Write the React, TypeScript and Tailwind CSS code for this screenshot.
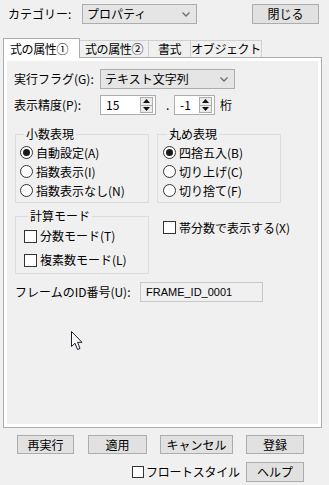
import React from 'react';

const Chevron = () => (
  <svg width="8" height="5" viewBox="0 0 8 5" className="shrink-0">
    <path d="M0.5 0.5 L4 4 L7.5 0.5" fill="none" stroke="#6d6d6d" strokeWidth="1.3" />
  </svg>
);

const Radio = ({ label, checked }: { label: string; checked?: boolean }) => (
  <div className="flex items-center h-[19px]">
    <span className="w-[13px] h-[13px] rounded-full border border-[#333] bg-white flex items-center justify-center shrink-0">
      {checked && <span className="w-[7px] h-[7px] rounded-full bg-[#1a1a1a]" />}
    </span>
    <span className="ml-[3px]">{label}</span>
  </div>
);

const Check = ({ label }: { label: string }) => (
  <div className="flex items-center">
    <span className="w-[13px] h-[13px] border border-[#333] bg-white shrink-0" />
    <span className="ml-[3px]">{label}</span>
  </div>
);

const Spin = ({ value, className }: { value: string; className: string }) => (
  <div className={`h-[20px] border border-[#adadad] bg-white flex items-center ${className}`}>
    <span className="pl-[5px] flex-1">{value}</span>
    <div className="mr-[2px] w-[13px] h-[16px] border border-[#adadad] bg-[#ececec] flex flex-col">
      <div className="flex-1 flex items-center justify-center border-b border-[#adadad]">
        <svg width="7" height="4" viewBox="0 0 7 4"><path d="M0 4 L3.5 0 L7 4 Z" fill="#111" /></svg>
      </div>
      <div className="flex-1 flex items-center justify-center">
        <svg width="7" height="4" viewBox="0 0 7 4"><path d="M0 0 L3.5 4 L7 0 Z" fill="#111" /></svg>
      </div>
    </div>
  </div>
);

const Btn = ({ label, className }: { label: string; className: string }) => (
  <button className={`border border-[#adadad] bg-[#e1e1e1] flex items-center justify-center leading-none ${className}`}>
    {label}
  </button>
);

export default function App() {
  return (
    <div className="relative w-[329px] h-[485px] bg-[#f0f0f0] text-[12px] leading-none text-black whitespace-nowrap font-['Noto_Sans_CJK_JP','Liberation_Sans',sans-serif] pt-[4px] overflow-hidden">
      {/* top row */}
      <div className="flex items-center h-[20px]">
        <span className="ml-[8px] w-[74px]">カテゴリー:</span>
        <div className="w-[115px] h-[20px] border border-[#adadad] bg-[#e5e5e5] flex items-center justify-between pl-[4px] pr-[6px]">
          <span>プロパティ</span>
          <Chevron />
        </div>
        <Btn label="閉じる" className="ml-[55px] w-[67px] h-[20px]" />
      </div>

      {/* tabs */}
      <div className="relative z-10 mt-[14px] ml-[3px] flex items-start h-[19px] tracking-[-0.4px]">
        <div className="w-[77px] h-[20px] border border-b-0 border-[#acacac] bg-white flex items-center pl-[6px]">式の属性①</div>
        <div className="mt-[2px] w-[69px] h-[17px] border border-l-0 border-b-0 border-[#d0d0d0] flex items-center justify-center">式の属性②</div>
        <div className="mt-[2px] w-[42px] h-[17px] border border-l-0 border-b-0 border-[#d0d0d0] flex items-center justify-center">書式</div>
        <div className="mt-[2px] w-[71px] h-[17px] border border-l-0 border-b-0 border-[#d0d0d0] flex items-center justify-center">オブジェクト</div>
      </div>

      {/* panel */}
      <div className="ml-[3px] w-[319px] h-[371px] border border-[#acacac] bg-white p-[3px]">
        <div className="h-full bg-[#f0f0f0] pt-[8px]">
          <div className="flex items-center h-[20px] pl-[7px]">
            <span className="w-[86px]">実行フラグ(G):</span>
            <div className="w-[135px] h-[20px] border border-[#adadad] bg-[#e5e5e5] flex items-center justify-between pl-[4px] pr-[6px]">
              <span>テキスト文字列</span>
              <Chevron />
            </div>
          </div>
          <div className="mt-[6px] flex items-center h-[20px] pl-[7px]">
            <span className="w-[86px]">表示精度(P):</span>
            <Spin value="15" className="w-[56px]" />
            <span className="ml-[10px] w-[8px]">.</span>
            <Spin value="-1" className="w-[41px]" />
            <span className="ml-[5px]">桁</span>
          </div>

          <div className="mt-[13px] ml-[8px] flex gap-[8px]">
            <fieldset className="w-[134px] border border-[#dcdcdc] pl-[4px] pt-[3px] pb-[2px]">
              <legend className="ml-[4px] px-[2px] leading-none">小数表現</legend>
              <Radio label="自動設定(A)" checked />
              <Radio label="指数表示(I)" />
              <Radio label="指数表示なし(N)" />
            </fieldset>
            <fieldset className="w-[124px] border border-[#dcdcdc] pl-[5px] pt-[3px] pb-[2px]">
              <legend className="ml-[4px] px-[2px] leading-none">丸め表現</legend>
              <Radio label="四捨五入(B)" checked />
              <Radio label="切り上げ(C)" />
              <Radio label="切り捨て(F)" />
            </fieldset>
          </div>

          <div className="mt-[7px] ml-[8px] flex gap-[8px]">
            <fieldset className="w-[134px] border border-[#dcdcdc] pl-[8px] pt-[2px] pb-[1px]">
              <legend className="ml-[4px] px-[2px] leading-none">計算モード</legend>
              <div className="h-[24px] flex items-center"><Check label="分数モード(T)" /></div>
              <div className="h-[24px] flex items-center"><Check label="複素数モード(L)" /></div>
            </fieldset>
            <div className="pt-[11px] pl-[6px]">
              <Check label="帯分数で表示する(X)" />
            </div>
          </div>

          <div className="mt-[8px] flex items-center h-[20px] pl-[8px]">
            <span className="w-[125px]">フレームのID番号(U):</span>
            <div className="w-[123px] h-[20px] border border-[#c8c8c8] bg-[#f0f0f0] flex items-center pl-[5px] font-['Liberation_Sans',sans-serif] text-[11px]">
              FRAME_ID_0001
            </div>
          </div>
        </div>
      </div>

      {/* bottom buttons */}
      <div className="mt-[7px] pl-[17px] flex">
        <Btn label="再実行" className="w-[57px] h-[19px]" />
        <Btn label="適用" className="ml-[14px] w-[59px] h-[19px]" />
        <Btn label="キャンセル" className="ml-[13px] w-[73px] h-[19px]" />
        <Btn label="登録" className="ml-[13px] w-[58px] h-[19px]" />
      </div>
      <div className="mt-[8px] pl-[132px] flex items-center">
        <span className="w-[12px] h-[12px] border border-[#333] bg-white shrink-0" />
        <span className="ml-[2px] w-[100px] tracking-[-0.3px]">フロートスタイル</span>
        <Btn label="ヘルプ" className="w-[58px] h-[20px]" />
      </div>

      {/* mouse pointer */}
      <svg className="absolute left-[71px] top-[331px]" width="13" height="20" viewBox="0 0 13 20">
        <path d="M0.5 0.5 L0.5 15.5 L4 12.2 L6.5 18.5 L9 17.5 L6.6 11.3 L11 11.3 Z" fill="#fff" stroke="#1a1a2e" strokeWidth="1" strokeLinejoin="round" />
      </svg>
    </div>
  );
}
